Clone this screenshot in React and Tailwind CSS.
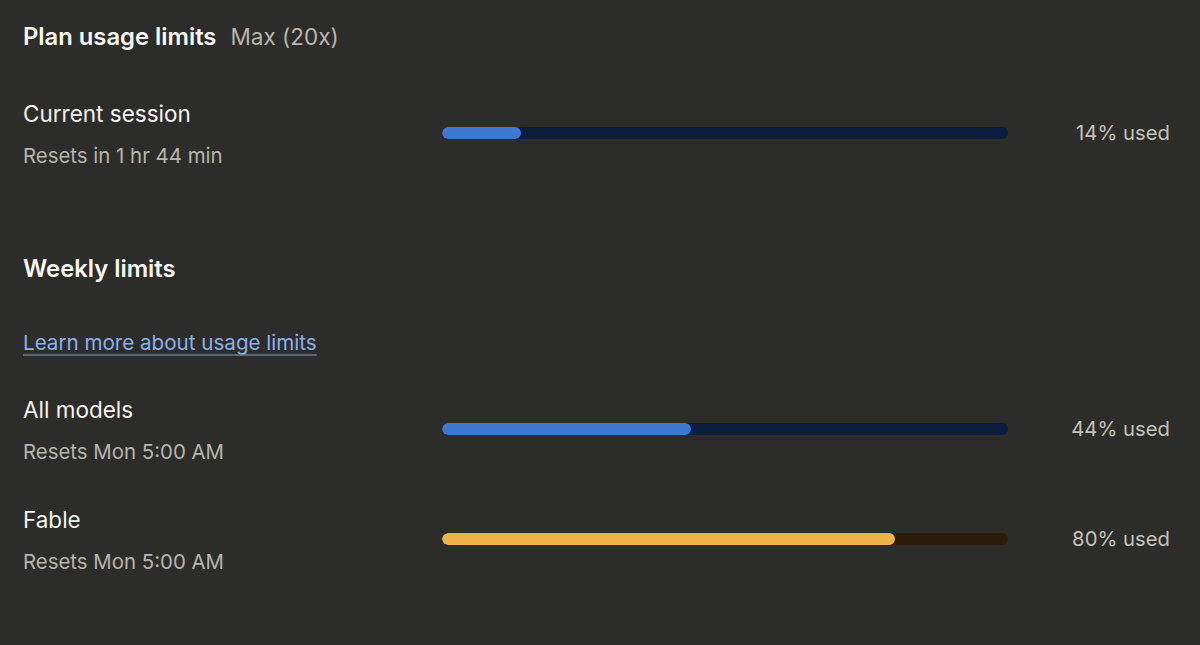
import React from 'react';

const rows = [
    { label: 'All models', reset: 'Resets Mon 5:00 AM', pct: 44, fill: 'bg-[#3f78d2]', track: 'bg-[#0b1e3e]' },
    { label: 'Fable', reset: 'Resets Mon 5:00 AM', pct: 80, fill: 'bg-[#ebb349]', track: 'bg-[#2c1d0b]' },
];

const UsageRow = ({ label, reset, pct, fill, track, className = '' }) => (
    <div className={`grid grid-cols-[419px_566px_1fr] items-center ${className}`}>
        <div>
            <div className="text-[22.5px] leading-[28px] text-[#f5f4ef]">{label}</div>
            <div className="mt-[15px] text-[20.4px] leading-[26px] text-[#b7b5ad]">{reset}</div>
        </div>
        <div className={`mb-[4px] h-[12px] rounded-full overflow-hidden ${track}`}>
            <div className={`h-full rounded-full ${fill}`} style={{ width: `${pct}%` }} />
        </div>
        <div className="mb-[2px] text-right pr-[30px] text-[20.3px] text-[#c4c2ba]">{pct}% used</div>
    </div>
);

export default function App() {
    return (
        <div className="min-h-screen w-full bg-[#2c2c2a] pl-[23px] pt-[22px] font-['Inter',sans-serif]">
            <div className="flex items-baseline gap-[14px]">
                <h1 className="text-[23.8px] leading-[30px] font-semibold text-[#faf9f5]">Plan usage limits</h1>
                <span className="text-[22.5px] leading-[30px] text-[#b7b5ad]">Max (20x)</span>
            </div>

            <UsageRow label="Current session" reset="Resets in 1 hr 44 min" pct={14} fill="bg-[#3f78d2]" track="bg-[#0b1e3e]" className="mt-[48px]" />

            <h2 className="mt-[85px] text-[23.8px] leading-[30px] font-semibold text-[#faf9f5]">Weekly limits</h2>

            <a href="#" className="mt-[45px] inline-block text-[20.6px] leading-[28px] text-[#8bb1ea] underline decoration-[#56657a] underline-offset-[4px]">
                Learn more about usage limits
            </a>

            <UsageRow {...rows[0]} className="mt-[39px]" />
            <UsageRow {...rows[1]} className="mt-[41px]" />
        </div>
    );
}
